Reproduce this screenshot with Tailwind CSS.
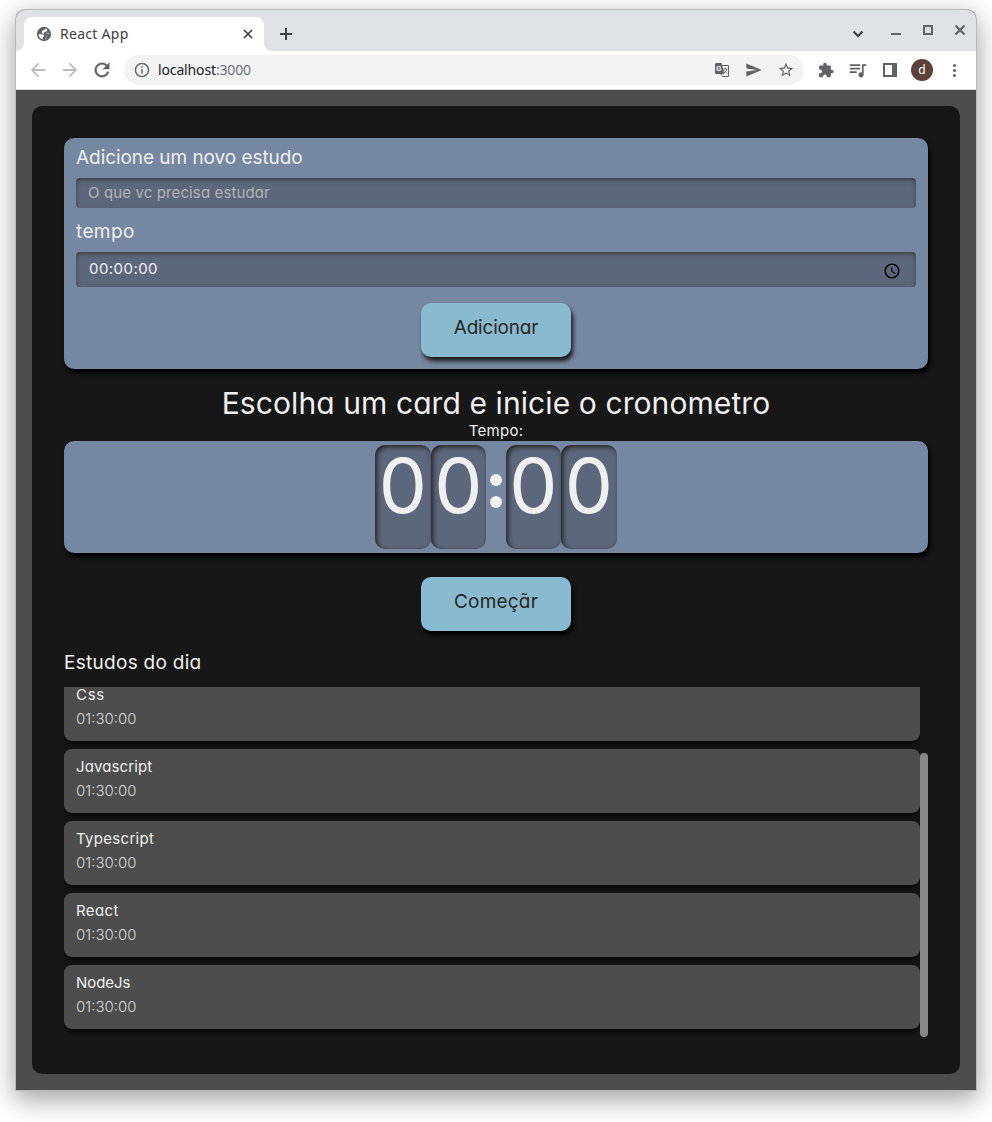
<!DOCTYPE html>
<html lang="pt-BR">
<head>
<meta charset="utf-8">
<title>React App</title>
<script src="https://cdn.jsdelivr.net/npm/@tailwindcss/browser@4"></script>
</head>
<body class="bg-white h-[1122px] overflow-hidden pt-[10px] px-4 font-['Noto_Sans',sans-serif]">
<div class="w-[960px] h-[1080px] rounded-t-[9px] ring-1 ring-[#b9b9b9] shadow-[0_8px_26px_2px_rgba(0,0,0,0.36)] flex flex-col overflow-hidden bg-[#4d4d4d]">

  <!-- Tab strip -->
  <div class="h-[41px] shrink-0 bg-[#dee1e6] flex items-end">
    <div class="w-2 h-2 bg-white"><div class="size-full bg-[#dee1e6] rounded-br-lg"></div></div>
    <div class="w-[240px] h-[34px] bg-white rounded-t-lg flex items-center pl-3 pr-[9px] text-[#3c4043]">
      <svg class="size-4" viewBox="0 0 16 16"><circle cx="8" cy="8" r="7.200" fill="#5f6368"/><path d="M2.500 8.300H6c1.600 0 2.300 1 1.900 2.400H6.700v2.800C4.200 12.900 2.500 10.800 2.500 8.300zM9.200 2.500L8.400 4.200C6.800 4.100 5.800 4.600 5.800 5.900 5.800 7.200 6.900 7.700 8.300 7.700c.3 1.200 1 1.700 2.200 1.700v1.700L9.300 13.400c2.500-.5 4.200-2.600 4.200-5.400 0-.4 0-.7-.1-1H11.500c-.9 0-1.300-.5-1.300-1.300L11.600 3.700C10.900 3.100 10.100 2.700 9.200 2.500z" fill="#fff"/><path d="M8.500 5.700h1.600c0 1.300.7 1.900 1.900 1.900h2.500c0 3.500-2 6-5 6.500l1.200-3c-.1-1.800-1.200-2.500-3-2.500z" fill="#5f6368"/></svg>
      <span class="ml-2 text-[14px] tracking-[0.02em] flex-1 -mt-px">React App</span>
      <svg class="size-[14px] stroke-[#3c4043] stroke-[1.7]" viewBox="0 0 14 14"><path d="M3 3l8 8M11 3l-8 8"/></svg>
    </div>
    <div class="w-2 h-2 bg-white"><div class="size-full bg-[#dee1e6] rounded-bl-lg"></div></div>
    <div class="flex items-center h-[34px] ml-[7px] flex-1">
      <svg class="size-[14px] stroke-[#3c4043] stroke-2" viewBox="0 0 14 14"><path d="M7 1v12M1 7h12"/></svg>
    </div>
    <div class="flex h-[41px] pt-3">
      <svg class="w-[38px] h-6" viewBox="0 0 38 24" fill="none" stroke="#3c4043" stroke-width="2"><path d="M14.500 9.500l4.500 4.500 4.500-4.500"/></svg>
      <svg class="w-8 h-6 ml-[3px]" viewBox="0 0 32 24" stroke="#5f6368" stroke-width="2"><path d="M11 12h10"/></svg>
      <svg class="w-8 h-6" viewBox="0 0 32 24" fill="none" stroke="#5f6368" stroke-width="2"><path d="M12 4h8v8h-8z"/></svg>
      <svg class="w-8 h-6" viewBox="0 0 32 24" stroke="#5f6368" stroke-width="2.200"><path d="M11.500 3.500l9 9M20.500 3.500l-9 9"/></svg>
    </div>
  </div>

  <!-- Toolbar -->
  <div class="h-[39px] shrink-0 bg-white border-b border-[#d9dbde] flex items-center pl-[6px]">
    <div class="w-8 flex justify-center"><svg class="size-5 fill-[#babcbe]" viewBox="1 1 22 22"><path d="M20 11H7.830l5.590-5.590L12 4l-8 8 8 8 1.410-1.410L7.830 13H20z"/></svg></div>
    <div class="w-8 flex justify-center"><svg class="size-5 fill-[#babcbe]" viewBox="1 1 22 22"><path d="M12 4l-1.410 1.410L16.170 11H4v2h12.170l-5.580 5.590L12 20l8-8z"/></svg></div>
    <div class="w-8 flex justify-center"><svg class="size-5 fill-[#5f6368] stroke-[#5f6368] stroke-[0.4]" viewBox="1 1 22 22"><path d="M17.650 6.350C16.200 4.900 14.210 4 12 4c-4.420 0-7.990 3.580-7.990 8s3.570 8 7.990 8c3.730 0 6.840-2.550 7.730-6h-2.080c-.82 2.330-3.040 4-5.650 4-3.310 0-6-2.690-6-6s2.690-6 6-6c1.660 0 3.140.69 4.220 1.780L13 11h7V4l-2.350 2.350z"/></svg></div>
    <div class="ml-[6px] w-[680px] h-[30px] rounded-full bg-[#f1f3f4] flex items-center px-[2px]">
      <div class="w-8 flex justify-center"><svg class="size-4 fill-[#5f6368]" viewBox="1 1 22 22"><path d="M11 7h2v2h-2zm0 4h2v6h-2zm1-9C6.480 2 2 6.480 2 12s4.480 10 10 10 10-4.480 10-10S17.520 2 12 2zm0 18c-4.410 0-8-3.590-8-8s3.590-8 8-8 8 3.590 8 8-3.590 8-8 8z"/></svg></div>
      <span class="flex-1 text-[14px] tracking-[-0.01em] text-[#202124] -mt-px">localhost<span class="text-[#6b6f74]">:3000</span></span>
      <div class="w-8 flex justify-center"><svg class="size-4" viewBox="0 0 16 16"><path d="M7.500 3.500H14.500V14.500H8.500L6.500 11.500" fill="none" stroke="#5f6368"/><path d="M2 1h5.500l3 11H2a1 1 0 0 1-1-1V2a1 1 0 0 1 1-1z" fill="#5f6368"/><text x="2" y="9.300" font-size="8" font-weight="700" fill="#f1f3f4" font-family="Roboto, sans-serif">G</text><path d="M9 7h4.500M11.300 5.800V7M12.800 7c-.4 1.800-1.500 3-2.500 3.800M10.500 8.500l2.500 3" fill="none" stroke="#5f6368" stroke-width=".8"/></svg></div>
      <div class="w-8 flex justify-center"><svg class="size-4 fill-[#5f6368]" viewBox="1.500 1 22 22"><path d="M2.010 21L23 12 2.010 3 2 10l15 2-15 2z"/></svg></div>
      <div class="w-8 flex justify-center"><svg class="size-4 fill-[#5f6368]" viewBox="1 1 22 22"><path d="M22 9.240l-7.190-.62L12 2 9.190 8.630 2 9.240l5.460 4.730L5.820 21 12 17.270 18.180 21l-1.630-7.030L22 9.240zM12 15.400l-3.760 2.270 1-4.280-3.320-2.880 4.380-.38L12 6.100l1.710 4.040 4.380.38-3.320 2.880 1 4.280L12 15.400z"/></svg></div>
    </div>
    <div class="ml-[6px] w-8 flex justify-center"><svg class="size-4 fill-[#5f6368]" viewBox="0.500 0 23 23"><path d="M20.500 11H19V7c0-1.100-.9-2-2-2h-4V3.500C13 2.120 11.880 1 10.500 1S8 2.120 8 3.500V5H4c-1.100 0-1.990.9-1.990 2v3.800H3.500c1.490 0 2.700 1.210 2.700 2.700s-1.210 2.700-2.700 2.700H2V20c0 1.100.9 2 2 2h3.800v-1.500c0-1.490 1.210-2.700 2.700-2.700 1.490 0 2.700 1.210 2.700 2.700V22H17c1.100 0 2-.9 2-2v-4h1.500c1.380 0 2.500-1.120 2.500-2.500S21.880 11 20.500 11z"/></svg></div>
    <div class="w-8 flex justify-center"><svg class="size-5 fill-[#5f6368]" viewBox="1 0 23 23"><path d="M15 5H3v2h12V5zm0 4H3v2h12V9zM3 15h8v-2H3v2zM17 5v9.180c-.31-.11-.65-.18-1-.18-1.660 0-3 1.340-3 3s1.340 3 3 3 3-1.340 3-3V7h3V5h-5z"/></svg></div>
    <div class="w-8 flex justify-center"><svg class="size-[14px]" viewBox="0 0 14 14"><path fill="#5f6368" fill-rule="evenodd" d="M0 0h14v14H0zM2 2v10h7V2z"/></svg></div>
    <div class="w-8 flex justify-center"><div class="size-[22px] rounded-full bg-[#5d4037] text-white text-[12px] leading-[21px] text-center">d</div></div>
    <div class="w-8 flex flex-col items-center gap-[2px]"><div class="size-[3px] rounded-full bg-[#5f6368]"></div><div class="size-[3px] rounded-full bg-[#5f6368]"></div><div class="size-[3px] rounded-full bg-[#5f6368]"></div></div>
  </div>

  <!-- Application -->
  <main class="flex-1 p-4 text-[#f0f0f0] font-['Inter',sans-serif] font-normal [font-feature-settings:'cv11'] whitespace-nowrap">
    <div class="h-[968px] rounded-[10px] bg-[#171717] p-8">
      <form class="h-[231px] rounded-[10px] bg-[#7687a1] px-3 shadow-[2px_4px_4px_#000]">
        <div class="h-10 pt-[10px] text-[19px] leading-5 tracking-[-0.003em]"><span>Adicione um novo estudo</span></div>
        <div class="h-[30px] rounded-[4px] bg-[#5d677c] shadow-[inset_0_2px_4px_#333c] px-3 flex items-center text-[15px] text-[#b3b3b3]"><span class="pt-px tracking-[0.008em]">O que vc precisa estudar</span></div>
        <div class="h-11 pt-[14px] text-[19px] leading-5 tracking-[0.02em]"><span>tempo</span></div>
        <div class="h-[35px] rounded-[4px] bg-[#5d677c] shadow-[inset_0_2px_4px_#333c] pl-[13px] pr-[15px] flex items-center justify-between text-[15px]"><span class="tracking-[0.03em]">00:00:00</span>
          <svg class="size-[18px] fill-black mt-[3px]" viewBox="0 0 24 24"><path d="M11.990 2C6.470 2 2 6.480 2 12s4.470 10 9.990 10C17.520 22 22 17.520 22 12S17.520 2 11.990 2zM12 20c-4.420 0-8-3.580-8-8s3.580-8 8-8 8 3.580 8 8-3.580 8-8 8zM12.500 7H11v6l5.250 3.150.75-1.230-4.500-2.670z"/></svg></div>
        <div class="mt-4 mx-auto w-[150px] h-[54px] rounded-[10px] bg-[#88bad0] shadow-[2px_4px_4px_#171717] flex items-center justify-center pb-1 text-[19px] text-[#272626] tracking-[-0.01em]"><span>Adicionar</span></div>
      </form>

      <h1 class="mt-4 h-9 leading-9 text-[30px] text-center tracking-[0.003em]"><span>Escolha um card e inicie o cronometro</span></h1>
      <div class="h-5 leading-5 text-[15px] text-center tracking-[0.02em]"><span>Tempo:</span></div>
      <div class="h-[112px] rounded-[10px] bg-[#7687a1] shadow-[2px_4px_4px_#000] flex justify-center pt-1 text-[75px] leading-[82px] text-center">
        <div class="w-[56px] h-[104px] rounded-[10px] bg-[#5d677c] shadow-[inset_2px_2px_5px_#222]"><div class="flex justify-center scale-x-[1.02]">0</div></div>
        <div class="w-[55px] h-[104px] rounded-[10px] bg-[#5d677c] shadow-[inset_2px_2px_5px_#222]"><div class="flex justify-center scale-x-[1.02]">0</div></div>
        <div class="w-5 flex flex-col items-center pt-[29px] gap-[10px]"><div class="size-3 rounded-full bg-[#f0f0f0]"></div><div class="size-3 rounded-full bg-[#f0f0f0]"></div></div>
        <div class="w-[55px] h-[104px] rounded-[10px] bg-[#5d677c] shadow-[inset_2px_2px_5px_#222]"><div class="flex justify-center scale-x-[1.02]">0</div></div>
        <div class="w-[56px] h-[104px] rounded-[10px] bg-[#5d677c] shadow-[inset_2px_2px_5px_#222]"><div class="flex justify-center scale-x-[1.02]">0</div></div>
      </div>
      <div class="mt-6 mx-auto w-[150px] h-[54px] rounded-[10px] bg-[#88bad0] shadow-[2px_4px_4px_#000] flex items-center justify-center pb-1 text-[19px] text-[#272626] tracking-[0.01em]"><span>Começãr</span></div>

      <h2 class="h-14 pt-[22px] text-[19px] leading-5 tracking-[0.015em]"><span>Estudos do dia</span></h2>
      <div class="h-[350px] flex overflow-hidden">
        <ul class="w-[856px] h-[350px] overflow-hidden flex flex-col justify-end gap-2 pb-2 text-[15px] leading-6">
          <li class="h-16 shrink-0 rounded-lg bg-[#4d4d4d] shadow-[0_4px_4px_#0008] px-3 pt-[6px]"><div class="tracking-[0.05em]">Css</div><div class="font-light text-[#d8d8d8]">01:30:00</div></li>
          <li class="h-16 shrink-0 rounded-lg bg-[#4d4d4d] shadow-[0_4px_4px_#0008] px-3 pt-[6px]"><div class="tracking-[0.008em]">Javascript</div><div class="font-light text-[#d8d8d8]">01:30:00</div></li>
          <li class="h-16 shrink-0 rounded-lg bg-[#4d4d4d] shadow-[0_4px_4px_#0008] px-3 pt-[6px]"><div class="tracking-[0.02em]">Typescript</div><div class="font-light text-[#d8d8d8]">01:30:00</div></li>
          <li class="h-16 shrink-0 rounded-lg bg-[#4d4d4d] shadow-[0_4px_4px_#0008] px-3 pt-[6px]"><div class="tracking-[0.025em]">React</div><div class="font-light text-[#d8d8d8]">01:30:00</div></li>
          <li class="h-16 shrink-0 rounded-lg bg-[#4d4d4d] shadow-[0_4px_4px_#0008] px-3 pt-[6px]"><div class="tracking-[-0.005em]">NodeJs</div><div class="font-light text-[#d8d8d8]">01:30:00</div></li>
        </ul>
        <div class="w-2 h-[284px] mt-[66px] rounded-full bg-[#888]"></div>
      </div>
    </div>
  </main>
</div>
</body>
</html>
